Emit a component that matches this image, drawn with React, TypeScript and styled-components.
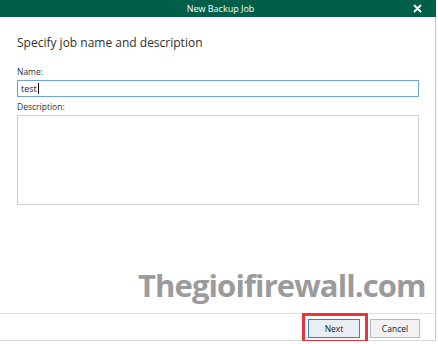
import styled, { createGlobalStyle } from "styled-components"

const GlobalStyle = createGlobalStyle`
 body {
    margin: 0;
    background: #ffffff;
    font-family: "Open Sans", "Noto Sans", sans-serif;
 }
`

const App: React.FC = () => {
    return (
        <>
            <GlobalStyle />
            <Window>
                <TitleBar>
                    <TitleText>New Backup Job</TitleText>
                    <CloseButton>
                        <svg width="9" height="9" viewBox="0 0 9 9">
                            <path d="M1 1 L8 8 M8 1 L1 8" stroke="#ffffff" strokeWidth="1.8" />
                        </svg>
                    </CloseButton>
                </TitleBar>
                <Body>
                    <Heading>Specify job name and description</Heading>
                    <FieldLabel>Name:</FieldLabel>
                    <NameBox>
                        test<Caret />
                    </NameBox>
                    <FieldLabel>Description:</FieldLabel>
                    <DescriptionBox />
                </Body>
                <Watermark>Thegioifirewall.com</Watermark>
                <Footer>
                    <DialogButton $primary>
                        Next
                        <Highlight />
                    </DialogButton>
                    <DialogButton>Cancel</DialogButton>
                </Footer>
            </Window>
        </>
    )
}

export default App

const Window = styled.div`
 position: relative;
 display: flex;
 flex-direction: column;
 width: 436px;
 height: 341px;
 border-right: 1px solid #c8c8c8;
 border-bottom: 1px solid #d8d8d8;
 box-sizing: border-box;
 background: #ffffff;
`

const TitleBar = styled.div`
 position: relative;
 display: flex;
 align-items: center;
 justify-content: center;
 height: 17px;
 background: #005e49;
 margin-right: -1px;
`

const TitleText = styled.div`
 color: #ffffff;
 font-size: 9px;
 line-height: 17px;
 margin-left: 5px;
`

const CloseButton = styled.div`
 position: absolute;
 right: 14px;
 top: 4px;
 display: flex;
`

const Body = styled.div`
 display: flex;
 flex-direction: column;
 flex: 1;
 padding: 18px 16px 0 17px;
`

const Heading = styled.div`
 color: #303030;
 font-size: 12px;
 line-height: 16px;
 margin-bottom: 15px;
`

const FieldLabel = styled.div`
 color: #303030;
 font-size: 8.5px;
 line-height: 11px;
 margin-bottom: 3px;
`

const NameBox = styled.div`
 display: flex;
 align-items: center;
 height: 17px;
 border: 1px solid #6aa4d8;
 box-sizing: border-box;
 padding-left: 3px;
 font-size: 9px;
 color: #202020;
 margin-bottom: 4px;
`

const Caret = styled.span`
 display: inline-block;
 width: 1px;
 height: 11px;
 background: #000000;
 margin-left: 1px;
`

const DescriptionBox = styled.div`
 height: 90px;
 border: 1px solid #cfcfcf;
 box-sizing: border-box;
`

const Watermark = styled.div`
 position: absolute;
 left: 138px;
 top: 264px;
 font-size: 31px;
 font-weight: 700;
 letter-spacing: -0.9px;
 color: #9b9b9b;
`

const Footer = styled.div`
 display: flex;
 justify-content: flex-end;
 align-items: flex-start;
 gap: 10px;
 height: 27px;
 border-top: 1px solid #e2e2e2;
 padding: 5px 15px 0 0;
 box-sizing: border-box;
`

const Highlight = styled.div`
 position: absolute;
 left: -7px;
 right: -9px;
 top: -7px;
 bottom: -6px;
 border: 3px solid #e8353b;
`

const DialogButton = styled.div<{ $primary?: boolean }>`
 position: relative;
 display: flex;
 align-items: center;
 justify-content: center;
 width: ${props => props.$primary ? "52px" : "50px"};
 height: 19px;
 box-sizing: border-box;
 border: 1px solid ${props => props.$primary ? "#3d7fc4" : "#b8b8b8"};
 background: ${props => props.$primary ? "#e8eef4" : "#f2f2f2"};
 font-size: 8.5px;
 color: #202020;
`
